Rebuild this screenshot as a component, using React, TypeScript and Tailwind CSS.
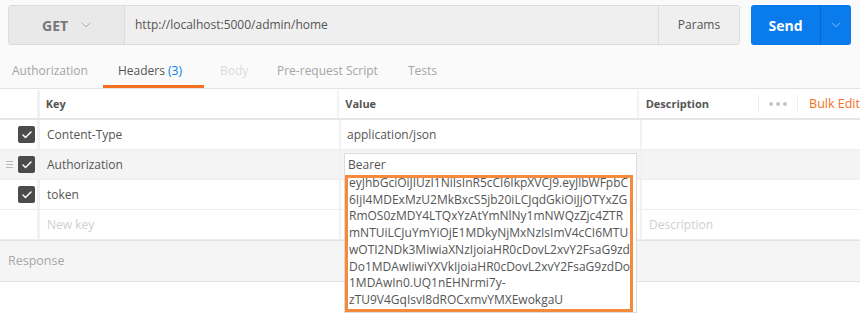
import React from "react";
import { Check, ChevronDown } from "lucide-react";

const tokenLines = [
  "eyJhbGciOiJIUzI1NiIsInR5cCI6IkpXVCJ9.eyJlbWFpbC",
  "6IjI4MDExMzU2MkBxcS5jb20iLCJqdGkiOiJjOTYxZG",
  "RmOS0zMDY4LTQxYzAtYmNlNy1mNWQzZjc4ZTR",
  "mNTUiLCJuYmYiOjE1MDkyNjMxNzIsImV4cCI6MTU",
  "wOTI2NDk3MiwiaXNzIjoiaHR0cDovL2xvY2FsaG9zd",
  "Do1MDAwIiwiYXVkIjoiaHR0cDovL2xvY2FsaG9zdDo",
  "1MDAwIn0.UQ1nEHNrmi7y-",
  "zTU9V4GqIsvI8dROCxmvYMXEwokgaU",
];

const Box = () => (
  <div className="w-[17px] h-[17px] rounded-[2px] bg-[#4b4b4b] flex items-center justify-center">
    <Check size={12} strokeWidth={3} color="#ffffff" />
  </div>
);

const Row = ({
  k,
  v,
  checked,
  hover,
  placeholder,
}: {
  k: string;
  v?: string;
  checked?: boolean;
  hover?: boolean;
  placeholder?: boolean;
}) => (
  <div
    className={`flex h-[30px] border-b border-[#eeeeee] ${hover ? "bg-[#f4f4f4]" : "bg-white"}`}
  >
    <div className="w-[40px] flex items-center justify-end pr-[2px] border-r-[3px] border-[#f2f2f2]">
      {hover && (
        <div className="mr-[5px] flex flex-col gap-[2px]">
          <div className="w-[7px] h-[1px] bg-[#b8b8b8]" />
          <div className="w-[7px] h-[1px] bg-[#b8b8b8]" />
          <div className="w-[7px] h-[1px] bg-[#b8b8b8]" />
        </div>
      )}
      {checked && <Box />}
    </div>
    <div
      className={`w-[301px] flex items-center pl-[7px] border-r-[2px] border-[#f2f2f2] ${placeholder ? "text-[#cfcfcf]" : "text-[#555555]"}`}
    >
      {k}
    </div>
    <div className="w-[301px] flex items-center pl-[6px] text-[#555555] border-r-[2px] border-[#f2f2f2]">
      {v}
    </div>
    <div className="flex-1 flex items-center pl-[7px] text-[#cfcfcf]">
      {placeholder ? "Description" : ""}
    </div>
  </div>
);

export default function App() {
  return (
    <div
      className="relative w-[860px] h-[329px] overflow-hidden bg-white text-[12px]"
      style={{ fontFamily: '"Open Sans", "Noto Sans", sans-serif' }}
    >
      {/* request bar */}
      <div className="bg-[#fafafa] pl-[8px] pr-[9px] pt-[5px] flex">
        <div className="flex flex-1 h-[40px] border border-[#dcdcdc] rounded-[3px] overflow-hidden">
          <div className="w-[116px] bg-[#e9e9e9] border-r border-[#dcdcdc] flex items-center pl-[33px] gap-[10px]">
            <span className="text-[14px] font-bold text-[#777777]">GET</span>
            <ChevronDown size={16} strokeWidth={1.5} color="#b0b0b0" />
          </div>
          <div className="flex-1 bg-[#efefef] flex items-center pl-[10px] text-[#555555]">
            http://localhost:5000/admin/home
          </div>
          <div className="w-[81px] bg-[#efefef] border-l border-[#dcdcdc] flex items-center justify-center text-[#555555]">
            Params
          </div>
        </div>
        <div className="ml-[11px] w-[100px] h-[40px] rounded-[3px] bg-[#097bed] flex">
          <div className="w-[69px] flex items-center justify-center text-white font-bold text-[14px]">
            Send
          </div>
          <div className="flex-1 border-l border-[#0866c8] flex items-center justify-center">
            <ChevronDown size={14} strokeWidth={1.5} color="#9cc6f2" />
          </div>
        </div>
      </div>

      {/* tabs */}
      <div className="bg-[#fafafa] h-[44px] flex items-end border-b border-[#e2e2e2] text-[12px]">
        <div className="w-[103px] pl-[12px] h-[26px] text-[#a5a5a5]">Authorization</div>
        <div className="w-[101px] pl-[15px] h-[26px] text-[#555555] border-b-[3px] border-[#f47023]">
          Headers <span className="text-[#097bed]">(3)</span>
        </div>
        <div className="w-[58px] pl-[16px] h-[26px] text-[#dadada]">Body</div>
        <div className="w-[131px] pl-[15px] h-[26px] text-[#a5a5a5]">Pre-request Script</div>
        <div className="pl-[15px] h-[26px] text-[#a5a5a5]">Tests</div>
      </div>

      {/* header row */}
      <div className="flex h-[31px] pt-[1px] border-b-[2px] border-[#e6e6e6] bg-white text-[11px] font-bold text-[#555555]">
        <div className="w-[40px] border-r-[3px] border-[#f2f2f2]" />
        <div className="w-[301px] flex items-center pl-[6px] border-r-[2px] border-[#f2f2f2]">Key</div>
        <div className="w-[301px] flex items-center pl-[6px] border-r-[2px] border-[#f2f2f2]">Value</div>
        <div className="w-[120px] flex items-center pl-[7px]">Description</div>
        <div className="flex items-center my-[5px] border-l border-r border-[#efefef] px-[10px] gap-[3px]">
          <div className="w-[4px] h-[4px] rounded-full bg-[#c4c4c4]" />
          <div className="w-[4px] h-[4px] rounded-full bg-[#c4c4c4]" />
          <div className="w-[4px] h-[4px] rounded-full bg-[#c4c4c4]" />
        </div>
        <div className="flex items-center pl-[11px] text-[12.5px] font-normal text-[#f47023] whitespace-nowrap">
          Bulk Edit
        </div>
      </div>

      <Row k="Content-Type" v="application/json" checked />
      <Row k="Authorization" checked hover />
      <Row k="token" checked />
      <Row k="New key" placeholder />

      {/* response */}
      <div className="h-[42px] bg-[#f5f5f5] border-t border-[#e2e2e2] border-b border-[#dddddd] flex items-center pl-[8px] text-[12.5px] text-[#a8a8a8]">
        Response
      </div>

      {/* value editor popup */}
      <div className="absolute left-[344px] top-[153px] w-[293px] h-[160px] bg-white border border-[#dcdcdc] text-[12px] text-[#555555]">
        <div className="h-[21px] flex items-center pl-[3px]">Bearer</div>
        <div className="w-[288px] h-[137px] border-[3px] border-[#f68a3c] overflow-hidden">
          <div className="-mt-[3px] pl-[1px] leading-[16.7px]">
            {tokenLines.map((l, i) => (
              <div key={i} className="whitespace-nowrap overflow-hidden">
                {l}
              </div>
            ))}
          </div>
        </div>
      </div>
    </div>
  );
}
